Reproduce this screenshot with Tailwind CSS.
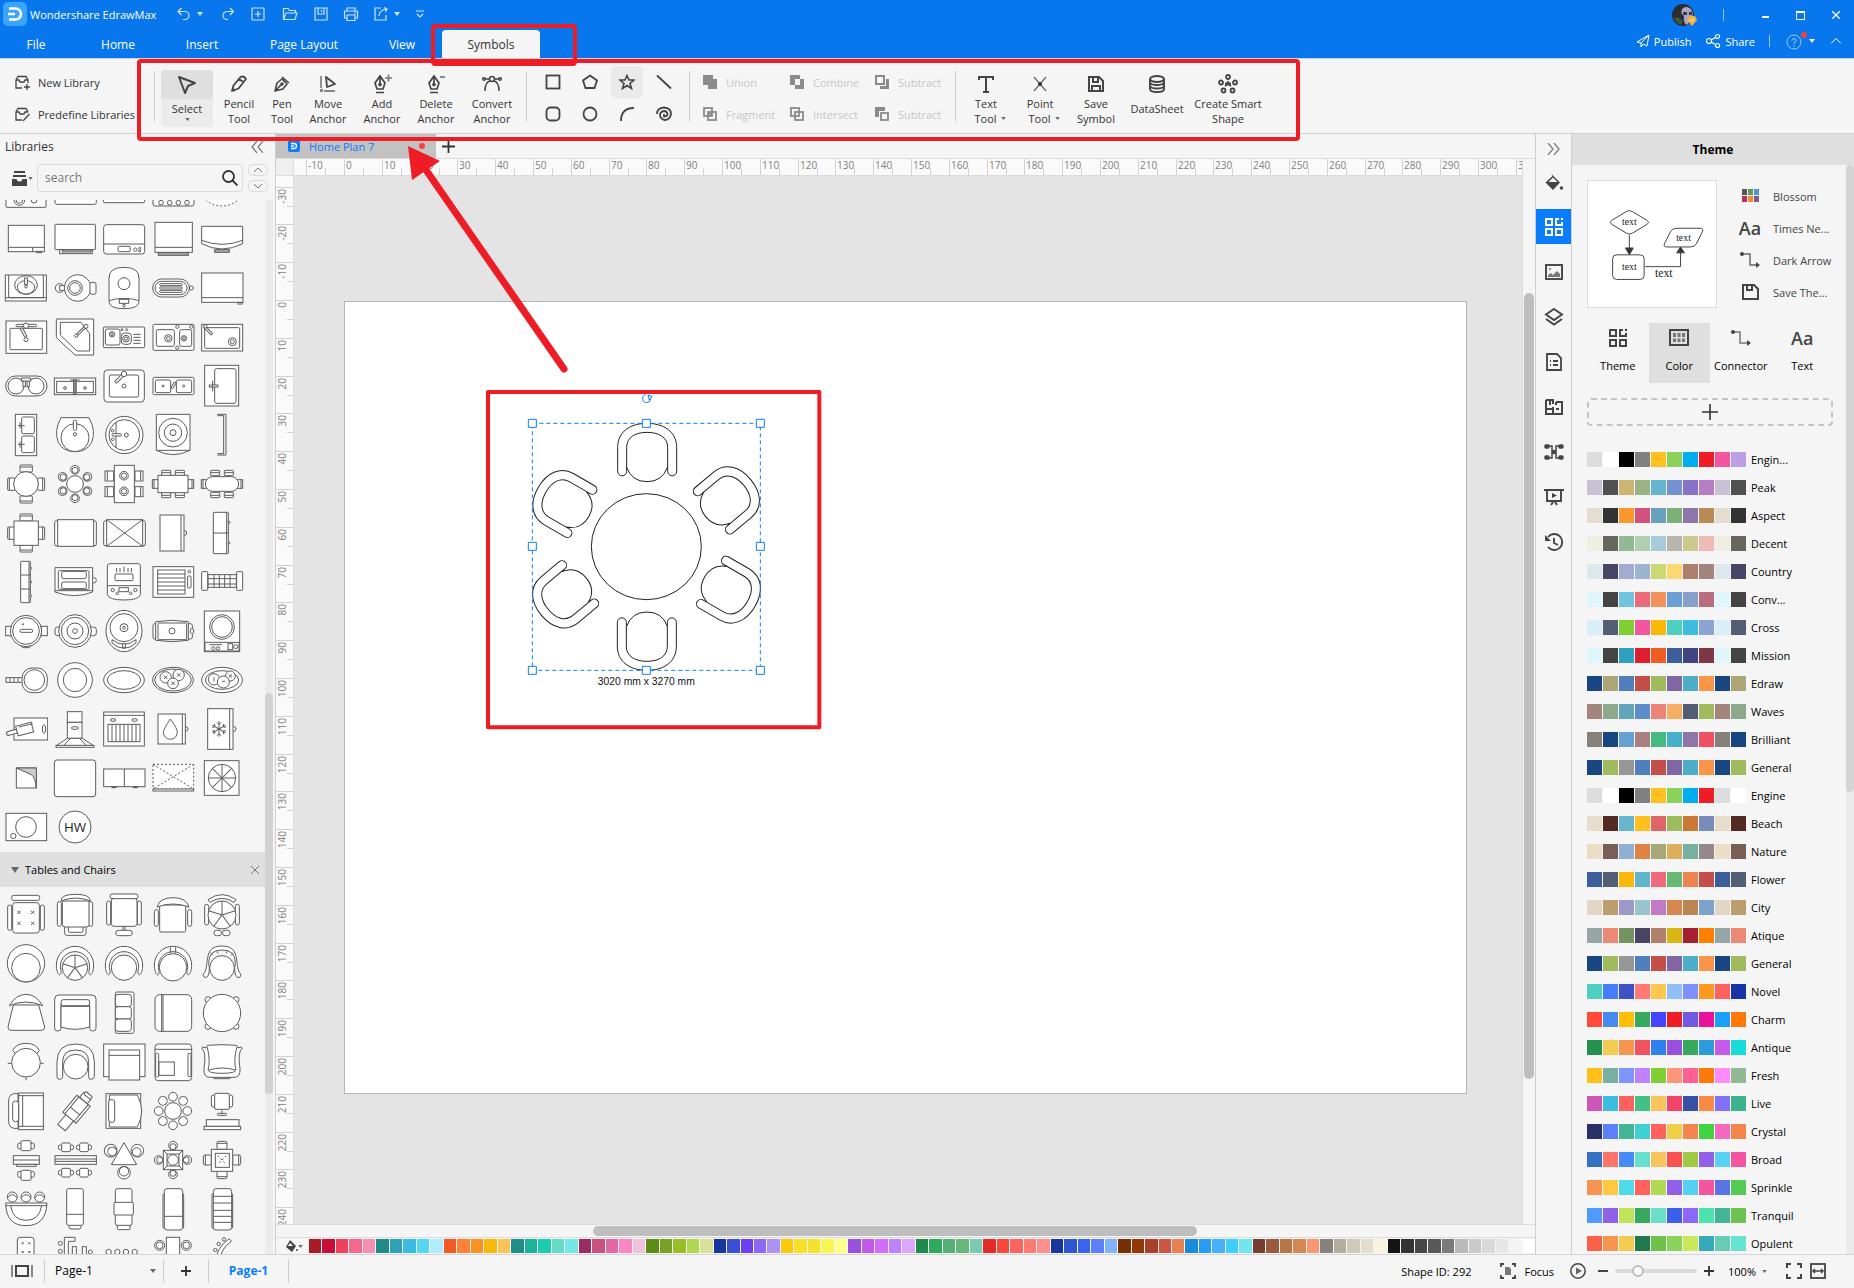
<!DOCTYPE html>
<html lang="en">
  <head>
    <meta charset="UTF-8" />
    <meta name="viewport" content="width=device-width, initial-scale=1.0" />
    <title>Wondershare EdrawMax</title>
    <script src="https://cdn.jsdelivr.net/npm/@tailwindcss/browser@4"></script>
  </head>
  <body class="bg-[#f5f5f5] font-['Open_Sans','Noto_Sans',sans-serif] text-[11px] leading-[15px] text-[#333]">
    <div class="relative flex h-screen flex-col overflow-hidden">
      <!-- Title bar and menu -->
      <header class="flex h-[58px] shrink-0 justify-between bg-[#0877ed] text-white">
        <div class="flex flex-col">
          <div class="flex h-7 items-center pl-[3px]">
            <svg class="h-6 w-6" viewBox="0 0 24 24" fill="none">
              <rect width="24" height="24" rx="5" fill="#3aa5ff" />
              <path d="M6 6.500H12.500A5.500 5.500 0 0 1 12.500 17.500H6M5 12H12" stroke="#fff" stroke-width="2.600" />
            </svg>
            <h1 class="ml-[3px] w-[142px]">Wondershare EdrawMax</h1>
            <div class="flex items-center">
              <button aria-label="Undo" class="flex w-[42px] items-center gap-1 pl-1">
                <svg class="h-4 w-4" viewBox="0 0 16 16" fill="none" stroke="#cfe5ff" stroke-width="1.200"><path d="M5.500 2 2 5.500 5.500 9M2 5.500H9A4 4 0 0 1 9 13.500H7" /></svg>
                <svg class="h-1 w-2" viewBox="0 0 8 4" fill="#cfe5ff"><path d="M1 0H7L4 4Z" /></svg>
              </button>
              <button aria-label="Redo" class="flex w-[28px] justify-center">
                <svg class="h-4 w-4" viewBox="0 0 16 16" fill="none" stroke="#cfe5ff" stroke-width="1.200"><path d="M10 2 13.500 5.500 10 9M13.500 5.500H7A4 4 0 0 0 7 13.500H8" /></svg>
              </button>
              <button aria-label="New" class="flex w-[32px] justify-center">
                <svg class="h-4 w-4" viewBox="0 0 16 16" fill="none" stroke="#cfe5ff" stroke-width="1.200"><rect x="2" y="2" width="12" height="12" rx="1" /><path d="M8 5V11M5 8H11" /></svg>
              </button>
              <button aria-label="Open" class="flex w-[32px] justify-center">
                <svg class="h-4 w-4" viewBox="0 0 16 16" fill="none" stroke="#cfe5ff" stroke-width="1.200"><path d="M1.500 13.500V2.500H6L7.500 4.500H13.500V7M1.500 13.500 4 7H15L13 13.500Z" /></svg>
              </button>
              <button aria-label="Save" class="flex w-[30px] justify-center">
                <svg class="h-4 w-4" viewBox="0 0 16 16" fill="none" stroke="#cfe5ff" stroke-width="1.200"><path d="M2 2H14V14H2ZM5 2V8H11V2M8.500 4V6" /></svg>
              </button>
              <button aria-label="Print" class="flex w-[30px] justify-center">
                <svg class="h-4 w-4" viewBox="0 0 16 16" fill="none" stroke="#cfe5ff" stroke-width="1.200"><path d="M4 5V2H12V5M4 12H1.500V5H14.500V12H12M4 9H12V14.500H4ZM11 7H13" /></svg>
              </button>
              <button aria-label="Export" class="flex w-[44px] items-center gap-1 pl-[7px]">
                <svg class="h-4 w-4" viewBox="0 0 16 16" fill="none" stroke="#cfe5ff" stroke-width="1.200"><path d="M8 2H2V14H13V9M6 10Q6 4 14 3M11 1.500 14 3 12.500 6" /></svg>
                <svg class="h-1 w-2" viewBox="0 0 8 4" fill="#cfe5ff"><path d="M1 0H7L4 4Z" /></svg>
              </button>
              <button aria-label="Customize" class="flex w-5 justify-center">
                <svg class="h-2 w-2" viewBox="0 0 8 8" fill="none" stroke="#cfe5ff" stroke-width="1.200"><path d="M0 1H8M1 4 4 7 7 4" /></svg>
              </button>
            </div>
          </div>
          <nav class="mt-0.5 flex h-7 text-xs text-white [&>button]:pt-0.5">
            <button class="w-[72px]">File</button>
            <button class="w-[92px]">Home</button>
            <button class="w-[76px]">Insert</button>
            <button class="w-[128px]">Page Layout</button>
            <button class="w-[68px]">View</button>
            <button class="ml-1.5 w-[98px] rounded-t-sm bg-[#f5f5f5] text-[#333]">Symbols</button>
          </nav>
        </div>
        <div class="flex flex-col items-end pr-2">
          <div class="flex h-[30px] items-center">
            <svg class="h-6 w-[26px]" viewBox="0 0 26 24">
              <circle cx="12" cy="12" r="11" fill="#2a2c30" />
              <path d="M11 6Q15 2 20 6L22 11Q20 20 15 22Q12 18 13 13Q9 11 11 6Z" fill="#a9a5c4" />
              <path d="M3 15Q8 13 12 18L10 22Q5 20 3 15Z" fill="#3a5a3c" />
              <path d="M12 9H16V12H12ZM18 9H21V12H18Z" fill="#3b3550" />
              <path d="M18 13H24L26 17L21 23L16 17Z" fill="#f7b23b" />
              <path d="M19 16 21 18 23 16" fill="none" stroke="#fff" />
            </svg>
            <span class="ml-[26px] h-3 w-px bg-white/60"></span>
            <button aria-label="Minimize" class="flex w-[82px] justify-center pt-1"><span class="h-0.5 w-[7px] bg-white"></span></button>
            <button aria-label="Maximize" class="-ml-4 flex w-5 justify-center"><span class="h-[9px] w-[9px] border border-t-2 border-white"></span></button>
            <button aria-label="Close" class="ml-4 flex w-5 justify-center">
              <svg class="h-2 w-2" viewBox="0 0 8 8" stroke="#fff" stroke-width="1.300"><path d="M0 0 8 8M8 0 0 8" /></svg>
            </button>
          </div>
          <div class="flex h-[22px] items-center">
            <button class="flex items-center gap-1">
              <svg class="h-[14px] w-[14px]" viewBox="0 0 14 14" fill="none" stroke="#fff"><path d="M1 8 13 1 11 12 7 10 5 13V9L12 2M1 8 5 9" /></svg>Publish
            </button>
            <button class="ml-[14px] flex items-center gap-1">
              <svg class="h-4 w-4" viewBox="0 0 16 16" fill="none" stroke="#fff" stroke-width="1.200"><circle cx="4" cy="8" r="2.500" /><circle cx="12.500" cy="3.500" r="2" /><circle cx="12.500" cy="12.500" r="2" /><path d="M6 7 10.500 4.500M6 9 10.500 11.500" /></svg>Share
            </button>
            <span class="mr-4 ml-[14px] h-3 w-px bg-white/60"></span>
            <button aria-label="Help" class="flex items-center">
              <svg class="h-[18px] w-[22px]" viewBox="0 0 22 18" fill="none"><circle cx="8" cy="10" r="7" stroke="#9cc9fa" /><path d="M6 8.500A2 2 0 1 1 8 10.500V12M8 13V14.500" stroke="#9cc9fa" /><circle cx="18" cy="3" r="3" fill="#f5413b" /></svg>
              <svg class="h-1 w-2" viewBox="0 0 8 4" fill="#fff"><path d="M1 0H7L4 4Z" /></svg>
            </button>
            <button aria-label="Collapse ribbon" class="ml-[10px] flex w-5 justify-center">
              <svg class="h-[6px] w-[10px]" viewBox="0 0 10 6" fill="none" stroke="#fff"><path d="M0 5.500 5 .5 10 5.500" /></svg>
            </button>
          </div>
        </div>
      </header>

      <!-- Ribbon -->
      <section class="flex h-[76px] shrink-0 items-start border-t border-b border-[#d0d0d0] text-[#333]">
        <div class="flex w-[154px] flex-col gap-[9px] pt-3 pl-[14px] whitespace-nowrap">
          <button class="flex h-[23px] items-center gap-[7px]">
            <svg class="h-4 w-[17px] shrink-0" viewBox="0 0 17 16" fill="none" stroke="#444" stroke-width="1.300"><path d="M8 13H2V5L4 1.500H12L14 5V8M2 5H5L6 7H10L11 5H14M13 9V15M10 12H16" /></svg>New Library
          </button>
          <button class="flex h-[23px] items-center gap-[7px]">
            <svg class="h-4 w-[17px] shrink-0" viewBox="0 0 17 16" fill="none" stroke="#444" stroke-width="1.300"><path d="M8 13H2V5L4 1.500H12L14 5M2 5H5L6 7H10L11 5H14M9 14 15.500 7" /></svg>Predefine Libraries
          </button>
        </div>
        <span class="mt-3 h-[51px] w-px bg-[#cfcfcf]"></span>
        <div class="ml-1.5 flex pt-[11px]">
          <button class="flex h-[57px] w-[52px] flex-col items-center rounded-sm bg-[#ebebeb]">
            <span class="flex h-[29px] w-full items-center justify-center rounded-t-sm bg-[#dfdfdf]">
              <svg class="h-5 w-5" viewBox="0 0 20 20" fill="none" stroke="#444" stroke-width="2" stroke-linejoin="round"><path d="M2 2 18 8 11 11 8 18Z" /></svg>
            </span>
            <span class="mt-0.5">Select</span>
            <svg class="mt-0.5 h-[3px] w-[5px]" viewBox="0 0 6 4" fill="#666"><path d="M0 0H6L3 4Z" /></svg>
          </button>
          <div class="ml-0.5 flex items-start pt-1">
            <button class="flex w-[48px] flex-col items-center">
              <svg class="mb-0.5 h-5 w-5" viewBox="0 0 20 20" fill="none" stroke="#444" stroke-width="1.800" stroke-linejoin="round"><path d="M3 17 4.500 11.500 11.500 3Q15 1.500 17 5L9.500 14.500ZM10 5 15 8.500M4 15 6 17" /></svg>Pencil<br />Tool
            </button>
            <button class="flex w-[38px] flex-col items-center">
              <svg class="mb-0.5 h-5 w-5" viewBox="0 0 20 20" fill="none" stroke="#444" stroke-width="1.600" stroke-linejoin="round"><path d="M3 17 5 9 10 5 15 10 11 15ZM10 3 17 9M3 17 9.500 10.500" /><circle cx="10" cy="10" r="1" /></svg>Pen<br />Tool
            </button>
            <button class="flex w-[54px] flex-col items-center">
              <svg class="mb-0.5 h-5 w-5" viewBox="0 0 20 20" fill="none" stroke="#444" stroke-width="1.800" stroke-linejoin="round"><path d="M3 2V14M6 17H17" stroke="#888" /><path d="M8 3 17 10 9 13Z" /><rect x="2" y="15" width="3" height="3" fill="#888" stroke="none" /></svg>Move<br />Anchor
            </button>
            <button class="flex w-[54px] flex-col items-center">
              <svg class="mb-0.5 h-5 w-5" viewBox="0 0 20 20" fill="none" stroke="#444" stroke-width="1.700"><path d="M8 2 3 9 5 15H11L13 9ZM8 3V10M4 18.500H12" /><circle cx="8" cy="10.500" r="1" /><path d="M13 4H20M16.500 .5V7.500" stroke="#777" /></svg>Add<br />Anchor
            </button>
            <button class="flex w-[54px] flex-col items-center">
              <svg class="mb-0.5 h-5 w-5" viewBox="0 0 20 20" fill="none" stroke="#444" stroke-width="1.700"><path d="M8 2 3 9 5 15H11L13 9ZM8 3V10M4 18.500H12" /><circle cx="8" cy="10.500" r="1" /><path d="M14 3H19" stroke="#777" /></svg>Delete<br />Anchor
            </button>
            <button class="flex w-[58px] flex-col items-center">
              <svg class="mb-0.5 h-5 w-5" viewBox="0 0 20 20" fill="none" stroke="#444" stroke-width="1.500"><path d="M3 5H8M12 5H17M3 17Q3 8 8 7M17 17Q17 8 12 7" /><circle cx="10" cy="5" r="2.500" /><circle cx="2" cy="5" r="1.300" /><circle cx="18" cy="5" r="1.300" /></svg>Convert<br />Anchor
            </button>
          </div>
        </div>
        <span class="mt-3 ml-[5px] h-[51px] w-px bg-[#cfcfcf]"></span>
        <div class="ml-[7px] grid grid-cols-[37px_37px_37px_37px] grid-rows-[32px_32px] pt-[7px] [&>button]:mx-auto [&>button]:flex [&>button]:h-8 [&>button]:w-8 [&>button]:items-center [&>button]:justify-center">
          <button aria-label="Rectangle"><svg class="h-4 w-4" viewBox="0 0 16 16" fill="none" stroke="#444" stroke-width="1.800"><rect x="1.500" y="1.500" width="13" height="13" /></svg></button>
          <button aria-label="Polygon"><svg class="h-4 w-4" viewBox="0 0 16 16" fill="none" stroke="#444" stroke-width="1.800"><path d="M8 1.500 15 6.500 12.500 14H3.500L1 6.500Z" /></svg></button>
          <button aria-label="Star" class="rounded-sm bg-[#eaeaea]"><svg class="h-4 w-4" viewBox="0 0 16 16" fill="none" stroke="#444" stroke-width="1.600"><path d="M8 1.500 10 6H15L11 9.500 12.500 14.500 8 11.500 3.500 14.500 5 9.500 1 6H6Z" /></svg></button>
          <button aria-label="Line"><svg class="h-4 w-4" viewBox="0 0 16 16" fill="none" stroke="#444" stroke-width="1.800"><path d="M1 1.500 15 14.500" /></svg></button>
          <button aria-label="Rounded rectangle"><svg class="h-4 w-4" viewBox="0 0 16 16" fill="none" stroke="#444" stroke-width="1.800"><rect x="1.500" y="1.500" width="13" height="13" rx="4" /></svg></button>
          <button aria-label="Ellipse"><svg class="h-4 w-4" viewBox="0 0 16 16" fill="none" stroke="#444" stroke-width="1.800"><circle cx="8" cy="8" r="6.500" /></svg></button>
          <button aria-label="Arc"><svg class="h-4 w-4" viewBox="0 0 16 16" fill="none" stroke="#444" stroke-width="1.800"><path d="M2 15Q2 2 15 2" /></svg></button>
          <button aria-label="Spiral"><svg class="h-4 w-4" viewBox="0 0 16 16" fill="none" stroke="#444" stroke-width="1.800"><path d="M1 8Q1 2 8 1.500 15 2 15 8 14 14 8.500 14 4 13 4 8.500 5 5 8.500 5 11.500 5.500 11.500 8.500 11 10.500 8 10.500V8" /></svg></button>
        </div>
        <span class="mt-3 ml-[7px] h-[51px] w-px bg-[#cfcfcf]"></span>
        <div class="ml-3 grid grid-cols-[87px_85px_76px] grid-rows-[32px_32px] pt-[7px] text-[#c6c6c6] [&>button]:flex [&>button]:items-center [&>button]:gap-2">
          <button disabled><svg class="h-4 w-4" viewBox="0 0 16 16" fill="#8b8b8b"><path d="M1 1H11V5H15V15H6V11H1Z" /></svg>Union</button>
          <button disabled><svg class="h-4 w-4" viewBox="0 0 16 16" fill="#8b8b8b" fill-rule="evenodd"><path d="M1 1H11V5H15V15H6V11H1ZM6 5V11H11V5Z" /></svg>Combine</button>
          <button disabled><svg class="h-4 w-4" viewBox="0 0 16 16" fill="#8b8b8b"><path d="M12 5H15V15H6V12H12Z" /><rect x="2" y="2" width="8" height="8" fill="none" stroke="#8b8b8b" stroke-width="2" /></svg>Subtract</button>
          <button disabled><svg class="h-4 w-4" viewBox="0 0 16 16" fill="none" stroke="#8b8b8b" stroke-width="1.800"><rect x="2" y="2" width="8" height="8" /><rect x="6" y="6" width="8" height="8" /><path d="M6 10 10 6" /></svg>Fragment</button>
          <button disabled><svg class="h-4 w-4" viewBox="0 0 16 16" fill="none" stroke="#8b8b8b" stroke-width="1.800"><rect x="2" y="2" width="8" height="8" /><rect x="6" y="6" width="8" height="8" /></svg>Intersect</button>
          <button disabled><svg class="h-4 w-4" viewBox="0 0 16 16" fill="#8b8b8b"><path d="M1 1H11V5H5V11H1Z" /><rect x="7" y="7" width="7" height="7" fill="none" stroke="#8b8b8b" stroke-width="1.800" /></svg>Subtract</button>
        </div>
        <span class="mt-3 ml-[5px] h-[51px] w-px bg-[#cfcfcf]"></span>
        <div class="ml-[3px] flex items-start pt-[15px] whitespace-nowrap">
          <button class="flex w-[54px] flex-col items-center">
            <svg class="mb-0.5 h-5 w-5" viewBox="0 0 20 20" fill="none" stroke="#444" stroke-width="2"><path d="M3 6V3H17V6M10 3V18M7 18H13" /></svg>
            <span>Text</span>
            <span class="flex items-center gap-1 pl-2">Tool <svg class="h-[3px] w-[5px]" viewBox="0 0 6 4" fill="#666"><path d="M0 0H6L3 4Z" /></svg></span>
          </button>
          <button class="flex w-[54px] flex-col items-center">
            <svg class="mb-0.5 h-5 w-5" viewBox="0 0 20 20" fill="none" stroke="#777" stroke-width="1.500"><path d="M4 3 16 17M16 3 4 17" /><circle cx="10" cy="10" r="2" fill="#333" stroke="none" /></svg>
            <span>Point</span>
            <span class="flex items-center gap-1 pl-2">Tool <svg class="h-[3px] w-[5px]" viewBox="0 0 6 4" fill="#666"><path d="M0 0H6L3 4Z" /></svg></span>
          </button>
          <button class="flex w-[58px] flex-col items-center">
            <svg class="mb-0.5 h-5 w-5" viewBox="0 0 20 20" fill="none" stroke="#444" stroke-width="2"><path d="M3 3H13L17 7V17H3ZM7 3V8H12V4M6 17V12H14V17" /></svg>Save<br />Symbol
          </button>
          <button class="flex w-[64px] flex-col items-center">
            <svg class="mb-[7px] h-5 w-5" viewBox="0 0 20 20" fill="none" stroke="#444" stroke-width="1.900"><path d="M3 5V15Q3 18 10 18Q17 18 17 15V5M3 8.500Q4 11 10 11T17 8.500M3 12Q4 14.500 10 14.500T17 12" /><ellipse cx="10" cy="5" rx="7" ry="3" /></svg>DataSheet
          </button>
          <button class="flex w-[78px] flex-col items-center">
            <svg class="mb-0.5 h-5 w-5" viewBox="0 0 20 20" fill="none" stroke="#444" stroke-width="1.800"><circle cx="10" cy="3" r="2" /><circle cx="3" cy="8.500" r="2" /><circle cx="17" cy="8.500" r="2" /><circle cx="5.500" cy="16.500" r="2" /><circle cx="14.500" cy="16.500" r="2" /><path d="M10 7V10L7 12M10 10 13 12M7 9.500H13" /></svg>Create Smart<br />Shape
          </button>
        </div>
      </section>

      <main class="flex min-h-0 flex-1">
        <!-- Libraries -->
        <aside class="flex w-[276px] shrink-0 flex-col border-r border-[#cfcfcf]">
          <div class="flex h-[30px] items-center justify-between pr-3 pb-1 pl-[5px]">
            <h2 class="text-xs">Libraries</h2>
            <button aria-label="Collapse panel"><svg class="h-3 w-3" viewBox="0 0 12 12" fill="none" stroke="#777" stroke-width="1.200"><path d="M6 0 1 6 6 12M12 0 7 6 12 12" /></svg></button>
          </div>
          <div class="flex h-7 items-center">
            <button aria-label="Library menu" class="flex w-[37px] items-center pl-3">
              <svg class="h-[15px] w-[15px]" viewBox="0 0 15 15" fill="#444"><path d="M2 0H13V2H2ZM1 4H14V6H1ZM0 8H4.500Q5 10.500 7.500 10.500T10.500 8H15V15H0Z" /></svg>
              <svg class="ml-px h-[3px] w-[5px]" viewBox="0 0 6 4" fill="#666"><path d="M0 0H6L3 4Z" /></svg>
            </button>
            <label class="flex h-7 w-[206px] items-center rounded-sm border border-[#dcdcdc] pr-1 pl-[7px]">
              <input type="text" placeholder="search" aria-label="Search libraries" class="w-full bg-transparent text-xs outline-none placeholder:text-[#777]" />
              <svg class="h-4 w-4 shrink-0" viewBox="0 0 16 16" fill="none" stroke="#333" stroke-width="1.800"><circle cx="6.500" cy="6.500" r="5.500" /><path d="M10.500 10.500 15.500 15.500" /></svg>
            </label>
            <div class="ml-[5px] flex flex-col gap-1">
              <button aria-label="Previous" class="flex h-3 w-5 items-center justify-center rounded-sm border border-[#dcdcdc]"><svg class="h-1 w-2" viewBox="0 0 8 4" fill="none" stroke="#777"><path d="M0 4 4 0 8 4" /></svg></button>
              <button aria-label="Next" class="flex h-3 w-5 items-center justify-center rounded-sm border border-[#dcdcdc]"><svg class="h-1 w-2" viewBox="0 0 8 4" fill="none" stroke="#777"><path d="M0 0 4 4 8 0" /></svg></button>
            </div>
          </div>
          <div class="mt-2 flex min-h-0 flex-1">
            <div class="w-[265px] overflow-hidden">
              <div id="kitchen" class="-mt-[35px] grid auto-rows-[49px] grid-cols-[49px_49px_49px_49px_49px] place-items-center pl-px"></div>
              <div class="mt-px flex h-[35px] items-center bg-[#dfdfdf] pr-1.5 pl-[11px] text-black">
                <svg class="h-[6px] w-2" viewBox="0 0 8 6" fill="#666"><path d="M0 0H8L4 6Z" /></svg>
                <h3 class="ml-1.5 flex-1">Tables and Chairs</h3>
                <button aria-label="Close library"><svg class="h-2 w-2" viewBox="0 0 8 8" stroke="#777"><path d="M0 0 8 8M8 0 0 8" /></svg></button>
              </div>
              <div id="chairs" class="mt-[3px] grid auto-rows-[49px] grid-cols-[49px_49px_49px_49px_49px] place-items-center pl-px"></div>
            </div>
            <div class="w-2 bg-[#ebebeb] pt-[493px]"><div class="h-[401px] rounded-full bg-[#d2d2d2]"></div></div>
          </div>
        </aside>

        <!-- Drawing area -->
        <section class="flex min-w-0 flex-1 flex-col border-r border-[#cfcfcf]">
          <div class="flex h-[25px] shrink-0 items-center border-b border-[#dcdcdc]">
            <button class="flex h-6 w-[160px] items-center bg-[#c2c2c2] pr-[11px] pl-3 text-[#0a7dff]">
              <svg class="h-3 w-3" viewBox="0 0 12 12" fill="none"><rect width="12" height="12" rx="2" fill="#0a7dff" /><path d="M3 3.500H6A2.500 2.500 0 0 1 6 8.500H3M3 6H6" stroke="#fff" stroke-width="1.300" /></svg>
              <span class="ml-[9px]">Home Plan 7</span>
              <span class="ml-auto h-1.5 w-1.5 rounded-full bg-[#f5413b]"></span>
            </button>
            <button aria-label="New tab" class="ml-1.5"><svg class="h-[13px] w-[13px]" viewBox="0 0 13 13" stroke="#333" stroke-width="1.800"><path d="M6.500 0V13M0 6.500H13" /></svg></button>
          </div>
          <div class="flex min-h-0 flex-1">
            <div class="flex min-w-0 flex-1 flex-col">
              <div class="flex h-[17px] shrink-0">
                <div class="w-[18px] border-r border-b border-[#dcdcdc] bg-[#efefef]"></div>
                <svg id="rulerX" class="h-[17px] w-full min-w-0 flex-1 border-b border-[#dcdcdc] bg-[#fafafa]"></svg>
              </div>
              <div class="flex min-h-0 flex-1">
                <svg id="rulerY" class="h-full w-[18px] shrink-0 border-r border-[#dcdcdc] bg-[#fafafa]"></svg>
                <div class="relative min-w-0 flex-1 overflow-hidden bg-[#e4e4e4]">
                  <div class="absolute top-[125px] left-[50px] h-[793px] w-[1123px] border border-[#b4b4b4] bg-white">
                    <svg class="absolute top-[77px] left-[135px] h-[360px] w-[350px]" viewBox="0 0 1050 1080" fill="none">
                      <g stroke="#222" stroke-width="3">
                        <ellipse cx="499" cy="503" rx="165" ry="159" />
                        <g id="seats"></g>
                      </g>
                      <rect x="157" y="133" width="684" height="741" stroke="#0a7dff" stroke-width="3" stroke-dasharray="12 9" />
                      <g fill="#fff" stroke="#0a7dff" stroke-width="3">
                        <path d="M145 121h24v24h-24ZM487 121h24v24h-24ZM829 121h24v24h-24ZM145 490h24v24h-24ZM829 490h24v24h-24ZM145 862h24v24h-24ZM487 862h24v24h-24ZM829 862h24v24h-24Z" />
                      </g>
                      <path d="M497 47A12 12 0 1 0 512 58M504 48 516 53 508 63Z" stroke="#0a7dff" stroke-width="3" />
                      <text x="499" y="919" text-anchor="middle" font-size="31" fill="#111" font-family="Liberation Sans, sans-serif">3020 mm x 3270 mm</text>
                      <rect x="24" y="39" width="994" height="1006" stroke="#ee1c25" stroke-width="12" stroke-linejoin="round" />
                    </svg>
                  </div>
                </div>
              </div>
            </div>
            <div class="w-[13px] border-l border-[#dcdcdc] pt-[134px] pl-px"><div class="h-[786px] w-[10px] rounded-full bg-[#bebebe]"></div></div>
          </div>
          <div class="h-[13px] shrink-0 border-t border-[#dcdcdc] pt-px pl-[317px]"><div class="h-[10px] w-[604px] rounded-full bg-[#bebebe]"></div></div>
          <div class="flex h-[17px] shrink-0 items-center border-t border-[#dcdcdc] pl-[10px]">
            <button aria-label="Fill color" class="flex w-[23px] items-center">
              <svg class="h-[14px] w-3" viewBox="0 0 12 14" fill="#444"><path d="M4 1 10 7 6 13 0 8Z" /><path d="M4 4 7 7H2Z" fill="#fff" /><circle cx="11" cy="11" r="1" /></svg>
              <svg class="h-[3px] w-[5px]" viewBox="0 0 6 4" fill="#666"><path d="M0 0H6L3 4Z" /></svg>
            </button>
            <div id="swatches" class="flex h-[14px] flex-1 gap-px"></div>
          </div>
        </section>

        <!-- Panel switcher -->
        <nav class="flex w-9 shrink-0 flex-col items-center border-r border-[#cfcfcf]">
          <button aria-label="Expand" class="flex h-[30px] w-full shrink-0 items-center justify-center"><svg class="h-3 w-[13px]" viewBox="0 0 13 12" fill="none" stroke="#777" stroke-width="1.200"><path d="M1 0 6 6 1 12M7 0 12 6 7 12" /></svg></button>
          <div class="flex w-full flex-col gap-[10px] [&>button]:flex [&>button]:h-[35px] [&>button]:items-center [&>button]:justify-center">
            <button aria-label="Fill"><svg class="h-5 w-5" viewBox="0 0 20 20" fill="#444"><path d="M7 1 8.500 3 16 10.500 9 18 1.500 10.500 8.500 4ZM9 5.500 4.500 10H13.500Z" fill-rule="evenodd" /><circle cx="17.500" cy="16" r="1.700" /></svg></button>
            <button aria-label="Theme" class="bg-[#0a7dff]"><svg class="h-5 w-5" viewBox="0 0 20 20" fill="none" stroke="#fff" stroke-width="2"><path d="M2 2H8V8H2ZM2 12H8V18H2ZM12 12H18V18H12ZM15 2H12V8H18V5" /><circle cx="18" cy="2" r="1.200" fill="#fff" stroke="none" /></svg></button>
            <button aria-label="Image"><svg class="h-5 w-5" viewBox="0 0 20 20" fill="none" stroke="#444" stroke-width="1.900"><rect x="2" y="3" width="16" height="14" /><path d="M4 15V13L7 11 9 13 13 9 16 12V15Z" fill="#777" stroke="none" /><circle cx="6" cy="7" r="1" fill="#777" stroke="none" /></svg></button>
            <button aria-label="Layers"><svg class="h-5 w-5" viewBox="0 0 20 20" fill="none" stroke="#444" stroke-width="1.900"><path d="M10 2 18 7.500 10 13 2 7.500ZM2 12 10 17.500 18 12" /></svg></button>
            <button aria-label="Notes"><svg class="h-5 w-5" viewBox="0 0 20 20" fill="none" stroke="#444" stroke-width="1.800"><path d="M3 2H13L17 6V18H3ZM6 9H7M9 9H14M6 13H7M9 13H14" /></svg></button>
            <button aria-label="Floor plan"><svg class="h-5 w-5" viewBox="0 0 20 20" fill="none" stroke="#444" stroke-width="2"><path d="M2 3H9V7M12 5H18V17H2V3M2 12H8M6 3V8M12 5V8M9 10V17M12 12H15" /></svg></button>
            <button aria-label="Network"><svg class="h-5 w-5" viewBox="0 0 20 20" fill="#444" stroke="#444" stroke-width="1.500"><path d="M5 4H8V16H5M15 4H12V16H15M8 10H12" fill="none" /><rect x="1" y="3" width="4" height="3" rx="1" /><rect x="15" y="3" width="4" height="3" rx="1" /><rect x="1" y="14" width="4" height="3" rx="1" /><rect x="15" y="14" width="4" height="3" rx="1" /><circle cx="10" cy="10" r="1.500" /></svg></button>
            <button aria-label="Presentation"><svg class="h-5 w-5" viewBox="0 0 20 20" fill="none" stroke="#444" stroke-width="1.900"><path d="M0 3H20M3 3V14H17V3M7 18 9 15M13 18 11 15" /><path d="M8 6 13 8.500 8 11Z" fill="#444" stroke="none" /></svg></button>
            <button aria-label="History"><svg class="h-5 w-5" viewBox="0 0 20 20" fill="none" stroke="#444" stroke-width="1.900"><path d="M4 5A8 8 0 1 1 4 15M10 6V11L14 13" /><path d="M1 3V9H7Z" fill="#444" stroke="none" /></svg></button>
          </div>
        </nav>

        <!-- Theme panel -->
        <aside class="flex w-[282px] shrink-0 flex-col text-black">
          <h2 class="flex h-[31px] shrink-0 items-center justify-center bg-[#dfdfdf] pt-px text-xs font-bold">Theme</h2>
          <div class="flex min-h-0 flex-1">
            <div class="flex w-[274px] flex-col overflow-hidden pt-[15px] pl-[15px]">
              <div class="flex shrink-0">
                <svg class="h-[128px] w-[130px] border border-[#dcdcdc] bg-white" viewBox="0 0 130 128" fill="none" stroke="#444" font-family="Liberation Serif, serif" font-size="10" text-anchor="middle">
                  <path d="M39 31Q42 29 45 31L60 40Q63 42 60 44L45 53Q42 55 39 53L24 44Q21 42 24 40ZM42 55V74M90 48H114Q118 48 116 52L110 64Q108 67 104 67H80Q76 67 78 63L84 51Q86 48 90 48ZM58 87H94V71" />
                  <rect x="25" y="75" width="32" height="25" rx="4" />
                  <path d="M38 68H46L42 75ZM90 73H98L94 67Z" fill="#333" />
                  <g fill="#222" stroke="none"><text x="42" y="45">text</text><text x="42" y="90">text</text><text x="97" y="61">text</text><text x="77" y="98" font-size="12">text</text></g>
                </svg>
                <div class="ml-5 flex flex-col text-[#444] [&_svg]:h-5 [&_svg]:w-[26px] [&>button]:flex [&>button]:h-8 [&>button]:items-center [&>button]:gap-2.5">
                  <button><svg viewBox="0 0 26 20"><rect x="5" y="3" width="5" height="6" fill="#555" /><rect x="11" y="3" width="5" height="6" fill="#5f9a5c" /><rect x="17" y="3" width="5" height="6" fill="#4f96d8" /><rect x="5" y="10" width="5" height="6" fill="#b5315a" /><rect x="11" y="10" width="5" height="6" fill="#fb8532" /><rect x="17" y="10" width="5" height="6" fill="#815a8c" /></svg>Blossom</button>
                  <button><span class="w-[26px] text-center text-lg font-semibold">Aa</span>Times Ne...</button>
                  <button><svg viewBox="0 0 26 20" fill="none" stroke="#666" stroke-width="1.500"><path d="M5 4H13V15H20" /><circle cx="5" cy="4" r="2" fill="#444" stroke="none" /><path d="M19 12 23 15 19 18Z" fill="#444" stroke="none" /></svg>Dark Arrow</button>
                  <button><svg viewBox="0 0 26 20" fill="none" stroke="#444" stroke-width="2"><path d="M6 3H17L21 7V17H6ZM10 3V8H15V3" /></svg>Save The...</button>
                </div>
              </div>
              <div class="mt-[15px] flex h-[60px] w-[246px] shrink-0 [&_svg]:h-5 [&>button]:flex [&>button]:flex-1 [&>button]:flex-col [&>button]:items-center [&>button]:gap-[10px] [&>button]:pt-[5px]">
                <button><svg viewBox="0 0 20 20" fill="none" stroke="#444" stroke-width="2"><path d="M2 2H8V8H2ZM2 12H8V18H2ZM12 12H18V18H12ZM15 2H12V8H18V5" /><circle cx="18" cy="2" r="1.200" fill="#444" stroke="none" /></svg>Theme</button>
                <button class="bg-[#dfdfdf]"><svg viewBox="0 0 20 20" fill="none" stroke="#444" stroke-width="2"><rect x="1" y="2" width="18" height="15" /><path d="M4 5H7V9H4ZM8.500 5H11.500V9H8.500ZM13 5H16V9H13ZM4 10.500H7V14H4ZM8.500 10.500H11.500V14H8.500ZM13 10.500H16V14H13Z" fill="#777" stroke="none" /></svg>Color</button>
                <button><svg viewBox="0 0 20 20" fill="none" stroke="#777" stroke-width="1.500"><path d="M2 4H9V15H16" /><circle cx="2" cy="4" r="2" fill="#444" stroke="none" /><path d="M16 12 20 15 16 18Z" fill="#444" stroke="none" /></svg>Connector</button>
                <button><span class="h-5 text-lg leading-5 font-semibold text-[#444]">Aa</span>Text</button>
              </div>
              <button aria-label="Add" class="mt-[15px] flex h-7 w-[246px] shrink-0 items-center justify-center rounded-sm border-2 border-dashed border-[#c4c4c4]">
                <svg class="h-4 w-4" viewBox="0 0 16 16" stroke="#333" stroke-width="1.600"><path d="M8 0V16M0 8H16" /></svg>
              </button>
              <ul id="themes" class="mt-[19px]"></ul>
            </div>
            <div class="w-2 bg-[#ebebeb]"><div class="h-[627px] rounded-t-full rounded-b-full bg-[#d4d4d4]"></div></div>
          </div>
        </aside>
      </main>

      <!-- Status bar -->
      <footer class="flex h-[34px] shrink-0 items-center border-t border-[#d4d4d4] pb-px text-black">
        <button aria-label="Toggle pages" class="flex w-11 justify-center"><svg class="h-3 w-[22px]" viewBox="0 0 22 12" fill="none" stroke="#444" stroke-width="2"><path d="M1 0V12M21 0V12" stroke="#888" /><rect x="5" y="1" width="12" height="10" /></svg></button>
        <span class="h-6 w-px bg-[#cfcfcf]"></span>
        <div class="relative w-[118px]">
          <select aria-label="Page" class="w-full appearance-none bg-transparent pl-[10px] text-xs"><option>Page-1</option></select>
          <svg class="pointer-events-none absolute top-1.5 right-[7px] h-1 w-1.5" viewBox="0 0 6 4" fill="#666"><path d="M0 0H6L3 4Z" /></svg>
        </div>
        <span class="h-6 w-px bg-[#cfcfcf]"></span>
        <button aria-label="Add page" class="flex w-11 justify-center"><svg class="h-[10px] w-[10px]" viewBox="0 0 10 10" stroke="#333" stroke-width="1.800"><path d="M5 0V10M0 5H10" /></svg></button>
        <span class="h-6 w-px bg-[#cfcfcf]"></span>
        <button class="w-[79px] text-xs font-bold text-[#0a7dff]">Page-1</button>
        <span class="h-6 w-px bg-[#cfcfcf]"></span>
        <div class="ml-auto flex items-center pr-7">
          <span>Shape ID: 292</span>
          <button class="ml-[29px] flex items-center gap-2">
            <svg class="h-4 w-4" viewBox="0 0 16 16" fill="none" stroke="#444" stroke-width="1.800"><path d="M1 4V1H4M12 1H15V4M15 12V15H12M4 15H1V12" /><path d="M5 4H9L11 6V12H5Z" fill="#777" stroke="none" /></svg>Focus
          </button>
          <button aria-label="Play" class="ml-4"><svg class="h-4 w-4" viewBox="0 0 16 16" fill="none" stroke="#444" stroke-width="1.500"><circle cx="8" cy="8" r="7.200" /><path d="M6 4.500 12 8 6 11.500Z" fill="#666" stroke="none" /></svg></button>
          <button aria-label="Zoom out" class="ml-3 h-0.5 w-[10px] bg-[#444]"></button>
          <input type="range" min="0" max="100" value="24" aria-label="Zoom" class="mx-[7px] h-1 w-[82px] appearance-none rounded-full bg-[#dadada] [&::-webkit-slider-thumb]:h-3 [&::-webkit-slider-thumb]:w-3 [&::-webkit-slider-thumb]:appearance-none [&::-webkit-slider-thumb]:rounded-full [&::-webkit-slider-thumb]:border-2 [&::-webkit-slider-thumb]:border-[#bdbdbd] [&::-webkit-slider-thumb]:bg-white" />
          <button aria-label="Zoom in"><svg class="h-[10px] w-[10px]" viewBox="0 0 10 10" stroke="#333" stroke-width="1.800"><path d="M5 0V10M0 5H10" /></svg></button>
          <button class="ml-[14px] flex items-center gap-1.5">100% <svg class="h-[3px] w-[5px]" viewBox="0 0 6 4" fill="#666"><path d="M0 0H6L3 4Z" /></svg></button>
          <button aria-label="Full screen" class="ml-[19px]"><svg class="h-4 w-4" viewBox="0 0 16 16" fill="none" stroke="#444" stroke-width="2"><path d="M1 5V1H5M11 1H15V5M15 11V15H11M5 15H1V11" /></svg></button>
          <button aria-label="Fit width" class="ml-2"><svg class="h-4 w-4" viewBox="0 0 16 16" fill="none" stroke="#444" stroke-width="1.800"><rect x="1" y="1" width="14" height="14" /><path d="M3 8H13M5 6 3 8 5 10M11 6 13 8 11 10" stroke-width="1.500" /></svg></button>
        </div>
      </footer>

      <!-- Callouts -->
      <div class="pointer-events-none absolute top-6 left-[431px] h-[42px] w-[146px] rounded-sm border-4 border-[#ee1c25]"></div>
      <div class="pointer-events-none absolute top-[59px] left-[137px] h-[82px] w-[1163px] rounded-sm border-4 border-[#ee1c25]"></div>
      <svg class="pointer-events-none absolute top-[140px] left-[400px] h-[240px] w-[180px]" viewBox="0 0 180 240">
        <path d="M164 229 26 30" stroke="#ee1c25" stroke-width="7" stroke-linecap="round" />
        <path d="M8 6 40 21 12 40Z" fill="#ee1c25" />
      </svg>
    </div>

    <script>
      // Drawing helpers, coordinates are relative to the middle of a 132 unit cell
      const R = (x, y, w, h, r = 0, f = "#fff") =>
        `<rect x="${x}" y="${y}" width="${w}" height="${h}" rx="${r}" fill="${f}"/>`;
      const C = (x, y, r) => `<circle cx="${x}" cy="${y}" r="${r}" fill="#fff"/>`;
      const E = (x, y, a, b) => `<ellipse cx="${x}" cy="${y}" rx="${a}" ry="${b}" fill="#fff"/>`;
      const F = (d, f = "#fff") => `<path d="${d}" fill="${f}"/>`;
      const L = (d) => `<path d="${d}" fill="none"/>`;
      const G = (t, s) => `<g transform="${t}">${s}</g>`;
      const rep = (list, fn) => list.map(fn).join("");
      const ring = (n, s, off = 0) =>
        rep([...Array(n).keys()], (i) => G(`rotate(${off + (i * 360) / n})`, s));
      const dash = (s) => `<g stroke-dasharray="6 6">${s}</g>`;
      const cross = (x, y, s = 5) =>
        L(`M${x - s} ${y - s}L${x + s} ${y + s}M${x + s} ${y - s}L${x - s} ${y + s}`);
      const drain = (x, y, r) => C(x, y, r) + C(x, y, r / 2);
      const arms = (x, y, h) => R(-x - 12, y, 12, h, 6) + R(x, y, 12, h, 6);
      const spokes = (y, r) => G(`translate(0 ${y})`, C(0, 0, r) + ring(5, L(`M0 0V${-r}`)) + C(0, 0, 3));
      const wrap =
        "M-56 3A56 56 0 0 1 56 3C56 18 52 30 46 33Q40 30 42 20A44 44 0 1 0-42 20Q-40 30-46 33C-52 30-56 18-56 3Z";
      const round = R(-18, -57, 37, 21, 2) + R(-18, 36, 37, 21, 2) + R(-55, -18, 21, 37, 2) + R(35, -18, 21, 37, 2) +
        L("M-50-18V18M50-18V18M-18-51H18M-18 51H18");
      const sideSeats = R(-34, -41, 27, 16, 2) + R(7, -41, 27, 16, 2) + R(-34, 25, 27, 16, 2) + R(7, 25, 27, 16, 2) +
        R(-62, -13, 18, 26) + R(44, -13, 18, 26) + L("M-33-34H-8M8-34H33M-33 34H-8M8 34H33M-57-13V13M57-13V13");

      const kitchen = [
        R(-60, -40, 120, 92, 2) + C(-20, 30, 16) + C(-20, 30, 10) + C(24, 30, 9),
        R(-60, -40, 124, 83, 6),
        R(-62, -40, 124, 78, 4),
        R(-60, -40, 123, 88, 6) + rep([-36, -10, 16, 42], (x) => C(x, 38, 7)),
        dash(E(0, 0, 60, 48)),

        R(-53, -41, 108, 79) + L("M-53 25H55M20 25V38") + R(32, 37, 14, 4),
        R(-60, -44, 121, 76, 2) + R(-46, 32, 98, 12) + R(-38, 33, 86, 6, 0, "#ccc"),
        R(-61, -43, 123, 88, 8) + L("M-61 15H62") + R(-18, 22, 37, 16, 4) + C(34, 32, 5) + C(47, 28, 3) + C(47, 36, 3),
        R(-54, -50, 112, 90) + L("M-54 25H58") + R(-44, 41, 90, 8, 0, "#aaa"),
        F("M-61-38H62V14Q0 46-61 14Z") + L("M-61 4Q0 28 62 4") + R(-22, 32, 44, 8, 0, "#aaa"),

        R(-62, -39, 123, 78) + L("M-52-39V29H52V-39M-62 29H62") + E(0, -9, 34, 28) + E(0, -2, 26, 20) + R(-4, -30, 8, 20) + C(0, -4, 4),
        C(-46, 0, 13) + R(-46, -7, 20, 14) + C(8, 0, 40) + C(0, 0, 22) + C(0, 0, 16) + R(45, -17, 18, 36, 6),
        F("M-45-30Q-45-62 0-62Q45-62 45-30V40Q45 62 0 62Q-45 62-45 40Z") + C(0, -13, 18) + L("M-45 38Q0 24 45 38") + R(-14, 34, 28, 12) + C(0, 53, 4),
        R(-61, -27, 110, 54, 27) + R(-54, -20, 96, 40, 20) + rep([-13, -3, 7], (y) => R(-40, y, 68, 6, 3)) + C(55, 0, 6),
        R(-61, -45, 124, 88) + L("M-61 29H63") + R(48, 43, 12, 5),

        R(-60, -48, 122, 97) + R(-48, -26, 97, 64, 2) + R(-30, -38, 62, 7, 3) + C(0, -34, 8) + G("rotate(-30)", R(-3, -30, 7, 30, 3)) + C(0, 8, 6),
        F("M-56-54H56V54H0L-56 2Z") + L("M-44-44H18L44-10V42H6L-44-6Z") + C(4, -4, 5) + G("rotate(45 18 -18)", R(15, -38, 6, 36, 3)) + C(33, -32, 6),
        R(-62, -30, 124, 62, 3) + R(-56, -24, 44, 48, 6) + drain(-36, -8, 8) + R(-8, -12, 30, 34, 10) + drain(6, 5, 10) + L("M28-8H50M28 1H50M28 10H50M28 19H50") + C(-6, -22, 3) + C(8, -22, 3),
        R(-60, -38, 123, 78, 4) + R(-50, -22, 54, 50, 5) + R(20, -22, 36, 50, 5) + drain(-14, 4, 11) + drain(33, 4, 8) + C(13, -31, 5) + C(55, -31, 5) + C(13, 32, 5),
        R(-61, -38, 123, 80) + R(-52, -28, 105, 62, 3) + drain(31, 14, 12) + G("rotate(-45 -44 -22)", R(-47, -36, 6, 34, 3)) + C(-50, -32, 5),

        R(-61, -30, 124, 60, 30) + C(-30, 0, 24) + C(30, 0, 24) + R(-9, -22, 7, 24) + R(3, -22, 7, 24) + R(-14, -24, 28, 9),
        R(-62, -24, 124, 50) + R(-55, -14, 52, 34) + R(3, -14, 52, 34) + C(-30, 6, 4) + C(30, 6, 4) + R(-4, -18, 7, 42, 0, "#999") + L("M-14-18H14"),
        R(-60, -48, 121, 96, 10) + R(-44, -33, 88, 66, 5) + C(0, 0, 6) + G("rotate(45 0 -36)", R(-4, -34, 8, 34, 3)) + C(0, -36, 8),
        R(-60, -26, 123, 52, 4) + R(-53, -18, 46, 38, 5) + R(10, -18, 46, 38, 5) + C(-30, 0, 3) + C(32, 0, 3) + G("rotate(35)", R(-3, -14, 6, 22, 3)),
        R(-52, -62, 102, 122) + R(-22, -52, 64, 104, 6) + R(-38, -3, 26, 6) + L("M-28-16V16"),

        R(-32, -62, 64, 124) + R(-13, -54, 38, 50, 5) + R(-13, 3, 38, 50, 5) + L("M-24-28H-4M-18-38V-20M-24 28H-4M-18 20V38"),
        F("M-42-52H42Q64-12 50 22Q36 50 0 50Q-36 50-50 22Q-64-12-42-52Z") + C(0, 8, 42) + R(-5, -44, 10, 30, 3) + C(0, -2, 5),
        C(1, 0, 56) + C(1, 0, 46) + L("M-24-39V39") + C(7, 0, 6) + R(-36, -4, 28, 7, 3) + C(-34, -13, 4) + C(-34, 13, 4),
        F("M-50-62H51V46Q0 72-50 46Z") + L("M-50 46H51") + C(0, -7, 43) + C(0, -7, 26) + C(0, -7, 9),
        L("M-14-62H12V60H-14M-14-58H5V56H-14"),

        round + C(0, 0, 37),
        ring(6, C(0, -43, 13) + C(0, -41, 9)) + C(0, 0, 25),
        rep([-25, 22], (y) => R(-57, y - 14, 26, 30) + R(33, y - 14, 24, 30) + L(`M-50 ${y - 14}V${y + 14}M50 ${y - 14}V${y + 14}`)) + R(-29, -56, 60, 112) + C(0, -25, 13) + C(0, -25, 8) + C(0, 22, 13) + C(0, 22, 8),
        sideSeats + R(-45, -26, 90, 52),
        sideSeats + R(-50, -22, 100, 44, 22),

        round + R(-36, -36, 73, 73),
        R(-61, -36, 14, 74, 4) + R(50, -36, 14, 74, 4) + R(-52, -40, 108, 80),
        R(-61, -36, 14, 74, 4) + R(50, -36, 14, 74, 4) + R(-52, -40, 108, 80) + L("M-52-40 56 40M56-40-52 40"),
        C(34, 0, 7) + R(-39, -54, 72, 108) + L("M24-54V54"),
        R(-26, -62, 45, 124, 2) + L("M-26 0H19M14-62V62") + C(21, -32, 3) + C(21, 30, 3),

        R(-16, -62, 29, 124, 2) + L("M-16-21H13M-16 21H13M9-62V62") + rep([-41, 0, 41], (y) => C(14, y, 3)),
        C(56, -5, 8) + F("M-60-43H53V30Q0 52-60 30Z") + L("M-60 26H53") + R(-50, -34, 92, 56, 3) + R(-40, -32, 74, 22, 6) + R(-40, 0, 74, 20, 6),
        F("M-50-48Q-50-55-42-55H42Q49-55 49-48V38Q45 54 0 54Q-45 54-50 38Z") + L("M-50 11H49M-22-42V-29M-12-42V-29M0-46V-29M12-42V-29M22-42V-29") + R(-27, -24, 54, 20, 3) + R(-15, 17, 28, 12) + C(-34, 24, 5) + C(34, 24, 5) + C(-20, 34, 4) + C(20, 34, 4),
        R(-60, -46, 122, 92) + R(-46, -36, 82, 72) + L("M-46-24H36M-46-12H36M-46 0H36M-46 12H36M-46 24H36") + C(49, -31, 4) + R(44, -18, 10, 36, 3),
        R(-42, -22, 85, 38) + L("M-42-10H43M-42 6H43M-24-22V16M-8-22V16M8-22V16M24-22V16") + R(-61, -31, 18, 56, 2) + R(44, -31, 18, 56, 2),

        R(-61, -14, 18, 28) + R(46, -14, 18, 28) + F("M-22 36H22L10 50H-10Z") + C(0, 0, 47) + C(0, 0, 40) + R(-18, -5, 38, 9, 4) + C(-9, -20, 2),
        R(-60, -12, 20, 26, 8) + R(44, -12, 20, 26, 8) + C(0, 0, 49) + C(0, 0, 41) + C(0, 0, 24) + C(0, 0, 7),
        E(0, 0, 54, 62) + C(0, -10, 42) + C(0, -10, 12) + C(0, -10, 4) + F("M-36 26Q0 54 36 26V36Q0 68-36 36Z") + R(-4, 38, 8, 12),
        R(-60, -22, 16, 46, 6) + R(42, -22, 16, 46, 6) + F("M-52-28Q0-36 46-28V28Q0 36-52 28Z") + R(-45, -24, 86, 50, 2) + C(-3, 0, 9) + R(52, -7, 10, 14, 3),
        R(-53, -60, 106, 122) + C(0, -12, 37) + C(0, -12, 31) + R(-51, 34, 102, 26) + C(-26, 52, 5) + C(-12, 52, 5) + L("M-38 41H0") + R(18, 38, 14, 18) + C(41, 47, 6),

        R(-60, -7, 50, 14) + L("M-48-7V7M-36-7V7M-24-7V7") + R(-12, -36, 76, 74, 30) + C(25, 0, 31),
        C(0, 0, 52) + C(0, 0, 35),
        E(0, 0, 61, 38) + E(0, 0, 50, 28),
        E(0, 0, 61, 38) + E(0, 0, 55, 33) + C(-22, -8, 17) + C(17, -15, 17) + C(0, 10, 16) + cross(-22, -8) + cross(17, -15) + cross(0, 10),
        E(0, 0, 61, 38) + E(0, 0, 50, 28) + C(-24, -2, 17) + C(25, -12, 15) + C(4, 6, 18) + cross(25, -12) + L("M-24-8V4M0 4H10"),

        R(-36, -33, 101, 66) + G("rotate(-15)", R(-60, -7, 34, 12, 6) + R(-28, -16, 48, 30)) + L("M-22-6 20-16") + E(54, 0, 5, 13),
        R(-23, -52, 44, 32) + R(-23, -20, 44, 48) + E(0, -3, 11, 4) + F("M-23 28H22L56 50H-56Z") + L("M-14 28-34 50M14 28 34 50") + R(-57, 49, 114, 6),
        R(-61, -51, 122, 102) + L("M-61-41H61") + E(-33, -27, 8, 4) + E(32, -27, 8, 4) + R(-48, -14, 96, 52) + L("M-36-14V38M-24-14V38M-12-14V38M0-14V38M12-14V38M24-14V38M36-14V38"),
        C(39, 0, 6) + R(-45, -45, 82, 90) + L("M28-45V45") + F("M-8-30Q14 0 13 10A21 21 0 0 1-29 10Q-28 0-8-30Z"),
        C(35, 0, 7) + R(-43, -61, 76, 122) + L("M23-61V61") + G("translate(-9 0)", ring(6, L("M0 0V-23M-6-20 0-14 6-20"))),

        R(-29, -30, 60, 60) + F("M-29-30H31V30Q28-2 16-10Z", "#ccc"),
        R(-62, -54, 124, 110, 8),
        R(-61, -27, 124, 53) + L("M1-27V26") + R(-36, 26, 12, 3) + R(28, 26, 12, 3),
        dash(R(-60, -41, 122, 74) + L("M-60-41 62 33M62-41-60 33")) + R(-60, 33, 122, 6),
        R(-53, -52, 104, 104) + C(0, 0, 41) + ring(8, L("M0 0V-41")),

        R(-60, -41, 122, 82) + C(0, 0, 31) + C(-38, 27, 8),
        C(0, 0, 48) +
          '<text x="0" y="15" font-size="40" text-anchor="middle" fill="#222" stroke="none">HW</text>',
      ];

      const chairs = [
        arms(43, -30, 76) + R(-43, -59, 84, 15, 6) + R(-40, -37, 80, 91, 8) + cross(-21, -8) + cross(20, -8) + cross(-21, 25) + cross(20, 25),
        R(-31, 30, 64, 31, 6) + R(-20, 30, 44, 22, 4) + arms(41, -40, 74) + F("M-38-42V28Q-38 36-30 36H34Q42 36 42 28V-42Z") + F("M-42-42Q-42-62 2-62Q46-62 46-42Q2-60-42-42Z"),
        arms(40, -42, 72) + R(-3, 32, 6, 16) + R(-25, 46, 50, 16, 8) + R(-38, -50, 77, 84, 8) + R(-42, -63, 84, 14, 6),
        arms(44, -16, 50) + R(-40, -30, 78, 81, 4) + F("M-48-24Q-40-52 0-52Q40-52 48-24Q0-42-48-24Z"),
        arms(40, -32, 62) + R(-24, 46, 22, 16, 7) + R(2, 46, 22, 16, 7) + spokes(0, 42) + F("M-42-46Q0-76 42-46L36-38Q0-62-36-38Z"),

        C(0, -2, 56) + C(0, 11, 43),
        F(wrap) + spokes(11, 38),
        F(wrap) + C(0, 11, 38),
        F(wrap) + L("M-8-50V-32M8-50V-32") + C(0, 10, 41),
        F("M-56 30C-34 10-62-54 0-54C62-54 34 10 56 30Q58 42 46 40Q34 30 40-4Q40-42 0-42Q-40-42-40-4Q-34 30-46 40Q-58 42-56 30Z") + L("M-28-26-34-34M-12-32-16-38M12-32 16-38M28-26 34-34") + C(0, 12, 37),

        F("M-38-24-54 42Q-54 52-46 52H46Q56 52 56 42L38-24Z") + F("M-50-22Q-30-56 0-56Q30-56 50-22Q0-44-50-22Z"),
        F("M-61-42Q-61-54-49-54H51Q63-54 63-42V46Q63 54 53 54Q44 54 44 46V-28H-42V46Q-42 54-52 54Q-61 54-61 46Z") + F("M-42-20V42Q0 56 44 42V-20Z") + R(-42, -40, 86, 18, 7),
        R(-26, -63, 56, 124, 5) + rep([-56, -19, 18], (y) => R(-26, y, 48, 37, 8)),
        R(-54, -55, 110, 110, 14) + L("M-30-55V55M-34-55V55"),
        C(-42, -40, 9) + C(42, -40, 9) + C(-42, 40, 9) + C(42, 40, 9) + C(0, 0, 56),

        L("M-55 4H-43M43 4H53M0 44V55") + F("M-40-34Q-30-56 0-56Q30-56 40-34L32-26Q0-46-32-26Z") + C(0, 2, 43),
        F("M-54 0Q-54-54 2-54Q58-54 58 0V44Q56 52 48 52Q41 52 41 44V-2Q40-36 2-36Q-36-36-37-2V44Q-38 52-46 52Q-54 52-54 44Z") + C(2, 14, 37),
        R(-61, -54, 124, 98) + R(-45, -36, 92, 90) + L("M-45-20H47"),
        R(-54, -54, 110, 110, 10) + L("M-54-38H56") + R(-52, -26, 9, 70, 3) + R(45, -26, 9, 70, 3) + R(-42, 0, 46, 40),
        R(-26, 42, 52, 8, 4) + F("M-61-42Q-60-48-48-42L-44-50Q0-54 44-50L48-42Q60-48 61-42Q46-30 54 20Q56 46 36 46H-36Q-56 46-54 20Q-46-30-61-42Z") + L("M-44-44Q-34 0-42 24Q-40 34 0 34T42 24Q34 0 44-44M-40 24Q0 12 40 24"),

        F("M-24-52Q-52-56-52-30V30Q-52 56-24 52Z") + R(-22, -54, 74, 110) + L("M-10-46V46M-22-46H52M-22 46H52") + R(-40, -30, 18, 62, 8),
        G("rotate(-50)", R(-64, -14, 40, 30) + R(40, -16, 20, 30, 3) + R(-26, -26, 66, 52) + L("M-26-18H40M-26 18H40M0-18V18") + R(56, -13, 10, 26, 3)),
        R(-54, -52, 104, 104) + F("M-44-48H40Q66 0 40 48H-44Z") + R(-46, -34, 18, 68, 7),
        ring(8, C(0, -43, 13)) + C(0, 0, 25),
        G("translate(0 -26)", R(-14, 33, 28, 6, 3) + L("M0 24V33") + arms(20, -22, 36) + R(-22, -27, 44, 48, 4)) + R(-47, 26, 98, 20) + R(-54, 46, 110, 10),

        G("translate(0 -43)", arms(13, -8, 18) + R(-15, -15, 30, 30, 4)) + G("translate(0 46)", arms(13, -12, 18) + R(-15, -15, 30, 30, 4)) + R(-38, -13, 78, 26) + L("M-38 0H40") + R(-28, 13, 58, 6),
        rep([-27, 27], (x) => G(`translate(${x} -38)`, arms(11, -7, 14) + R(-13, -13, 26, 26, 4)) + G(`translate(${x} 38)`, arms(11, -7, 14) + R(-13, -13, 26, 26, 4))) + R(-60, -13, 124, 26) + L("M-60-3H64M-60 4H64"),
        G("rotate(-60 -40 -28)", C(-40, -28, 19) + C(-40, -23, 13)) + C(40, -28, 19) + C(38, -24, 13) + C(0, 38, 19) + C(0, 34, 14) + F("M0-52 38 14H-38Z"),
        ring(4, C(0, -43, 13) + C(0, -40, 9)) + R(-29, -29, 58, 58) + L("M-29-29 29 29M29-29-29 29") + R(-18, -18, 36, 36) + C(0, 0, 16),
        ring(4, R(-15, -56, 30, 24, 5) + L("M-15-50H15")) + R(-32, -32, 64, 66) + R(-20, -20, 42, 42) + dash(cross(0, 0, 13)),

        rep([-41, 0, 41], (x) => C(x, -36, 15) + L(`M${x - 14} -34Q${x} -52 ${x + 14} -34`)) + F("M-61-18H63Q60 50 0 50T-61-18Z") + L("M-61-10H63M-46-10Q-40 34 0 34T47-10"),
        R(-18, 46, 36, 14, 6) + R(-25, -61, 50, 110, 6) + L("M-25 16H25"),
        R(-20, 46, 38, 16, 3) + R(-26, -61, 50, 110, 6) + R(-30, -20, 58, 38, 3),
        R(-30, -46, 62, 104, 4) + R(-26, -61, 55, 124, 8) + L("M-26 22H29"),
        R(-30, -46, 62, 104, 4) + R(-26, -61, 55, 124, 8) + L("M-26-38H29M-26-18H29M-26 4H29M-26 22H29M-26 40H29"),

        R(-26, -62, 50, 90, 8) + cross(-10, -44, 3) + cross(10, -44, 3) + cross(-10, -18, 3) + cross(10, -18, 3),
        R(-8, -34, 12, 40) + R(22, -34, 12, 40) + F("M-32-62H0V-50H-20V20H-32Z") + C(-44, -44, 6) + C(-44, -20, 6) + C(46, -18, 6),
        rep([-46, -20, 6, 32], (x) => C(x, -18, 8)),
        C(-40, -38, 15) + C(-40, -38, 10) + C(40, -38, 15) + C(40, -38, 10) + R(-20, -62, 40, 90),
        F("M22-58 28-50Q-8-26-8 20H-20Q-20-30 22-58Z") + C(6, -56, 5) + C(-10, -42, 5) + C(-20, -24, 5),
      ];

      const cell = (s) =>
        `<svg class="h-11 w-11" viewBox="-66 -66 132 132" stroke="#5c5c5c" stroke-width="3">${s}</svg>`;
      document.getElementById("kitchen").innerHTML = rep(kitchen, cell);
      document.getElementById("chairs").innerHTML = rep(chairs, cell);

      // Six chairs round the table
      const chair =
        '<path d="M-88-15C-88-62-50-87 0-87S89-62 89-15V57A13 13 0 0 1 62 57V-15C62-45 35-60 0-60S-61-45-61-15V57A13 13 0 0 1-88 57ZM-61 45Q-46 88 0 88T61 45"/>';
      document.getElementById("seats").innerHTML = rep(
        [[501, 220, 0], [250, 369, -60], [745, 357, 50], [750, 638, 120], [251, 653, -130], [501, 787, 180]],
        ([x, y, a]) => G(`translate(${x} ${y}) rotate(${a})`, chair)
      );

      // Rulers, 10 mm every 37.8 px
      function ruler(id, vertical) {
        const zero = vertical ? 124 : 50;
        let out = "";
        for (let mm = vertical ? -30 : -10; mm <= (vertical ? 240 : 310); mm += 10) {
          const p = Math.round(zero + mm * 3.78);
          const half = p + 19;
          out += vertical
            ? `<path d="M0 ${p}.5H18M11 ${half}.5H18" stroke="#d2d2d2"/><text transform="translate(10 ${p + 2}) rotate(-90)" text-anchor="end">${mm}</text>`
            : `<path d="M${p}.5 0V17M${half}.5 9V17" stroke="#d2d2d2"/><text x="${p + 2}" y="10">${mm}</text>`;
        }
        document.getElementById(id).innerHTML = `<g font-size="10" fill="#808080">${out}</g>`;
      }
      ruler("rulerX", false);
      ruler("rulerY", true);

      const colors =
        "a81c2a c90e35 ed415e f4688a f88fb2 218a8a 30a0b8 3abce0 55d6f2 b0ecfc f25a24 ff8036 fb921f fab80a f9c35c " +
        "218d87 1ab49b 1bccb1 66dcc6 72e8e8 9a2c62 c9517f e467a7 fc86c2 f1c2dc 5d8b13 76a228 9abd27 b1d751 d8e09a " +
        "17359f 3a4fd8 6b40f2 8c68f6 ad92f6 fbc90a f7e028 f5e22e f9f552 fdff8a 9a50de c259e8 d26dfb bd82ff dba8fb " +
        "1f8a4c 2fa95a 54af78 63b87a 7ccbb0 e52a2c fb463b fc625e fe7a72 fd908c 17359f 2f56d2 3a63f0 5c80fc 82b3f8 " +
        "753006 923705 a93f28 cf5540 ea7f50 1a8bdc 289df5 46b0fe 3dcffc 70e6ec 743d32 9b5a3d b57545 d68650 fb9770 " +
        "88807a b3ad9c cec9b9 e5ddce f8f2de 141414 333333 464646 585858 7a7a7a b9b9b9 c9c9c9 d9d9d9 e6e6e6 f4f4f4 ffffff";
      document.getElementById("swatches").innerHTML = rep(
        colors.split(" "),
        (c) => `<button class="h-full flex-1" aria-label="#${c}" style="background:#${c}"></button>`
      );

      const themes = [
        ["Engin...", "dddddd ffffff 000000 808080 fec020 8ad25a 00aeef ee1c25 f3569f bd9fe6"],
        ["Peak", "c9c2d4 505050 ccb472 9bb384 66b5cf 7491d2 8672c8 b57dc2 c9c2d4 505050"],
        ["Aspect", "e5ddd0 333333 fb972d d2527d 68a1be 7db077 8e76a9 b98a55 e5ddd0 333333"],
        ["Decent", "eeeee4 66665c 93b896 b0cfb1 a7cbd9 b8b4ae cbc98c eebab8 eeeee4 66665c"],
        ["Country", "dde8ec 484463 a2acd0 9db4cf cbd873 fbd873 b07f6c a2857d dde8ec 484463"],
        ["Conv...", "def6fc 444444 70c5de ed6a7c f2925a 6c9ed6 86a0cc b96d7f def6fc 444444"],
        ["Cross", "d8effa 535e74 80cf32 f3569f fab80a 4fcfc0 3dbde0 8aa5d4 d8effa 535e74"],
        ["Mission", "def6fc 444444 2da1be dc1e2e ef5c24 3c5f9c 404480 7d3745 def6fc 444444"],
        ["Edraw", "184680 ada677 4f80bd c44f4a 9fbb5d 8066a2 4caec8 f89549 184680 ada677"],
        ["Waves", "a2857d 8ca98a 60a5ba 5d8eca ee8478 f6ad64 535e74 9fbb5d a2857d 8ca98a"],
        ["Brilliant", "88807a 184680 66a0d4 a9807f 45bb80 46b0c8 8e76a9 ee5262 88807a 184680"],
        ["General", "184680 9fbb5d 969696 4f80bd c44f4a 8066a2 4caec8 f89549 184680 9fbb5d"],
        ["Engine", "dddddd ffffff 000000 808080 fec020 8ad25a 00aeef ee1c25 dddddd ffffff"],
        ["Beach", "e8ddca 512a24 68b5ce fec020 de6666 9fbb5d c97836 788cba e8ddca 512a24"],
        ["Nature", "ecdec4 795e55 90afd3 df8345 a6aa78 daaf5d 77b0a0 93898b ecdec4 795e55"],
        ["Flower", "3c5f9c 535e74 fab80a 5fb5ca ee6a7c 66b874 ee8452 c44f4a 3c5f9c 535e74"],
        ["City", "e2d6c6 bb9d6f 9c99c8 98c5cb c07ac6 d68650 b98652 7da3cc e2d6c6 bb9d6f"],
        ["Atique", "96a6a6 ee8874 759262 484463 b08168 dab414 a5202c ff8000 96a6a6 ee8874"],
        ["General", "184680 9fbb5d 969696 4f80bd c44f4a 8066a2 4caec8 f89549 184680 9fbb5d"],
        ["Novel", "4ed0c0 457dff 3f50c8 ff7a72 fec850 90bff8 7d90ff fd9820 ff625e 1735a5"],
        ["Charm", "ff4a3a 4689f2 fcbe06 37a95d 4545ff ee1c25 7159e2 e8139a 1a9ff8 ff780a"],
        ["Antique", "259050 f2cb50 f49550 f05260 2e80ee 9a50de 37a95d 2c9bdc c65aea 18dcda"],
        ["Fresh", "fec018 77b0a0 8094ff bf82ff 80cf32 fb9678 ff6094 ff780a ff8aff 93b896"],
        ["Live", "cd57b5 3dbde0 fa6260 45c084 fac35c f04468 3850a5 f98a44 8470f4 3cb290"],
        ["Crystal", "283166 5c80fa 42b595 40d0d2 ff625e f0ce4a f2844c 40d440 f469be f2844c"],
        ["Broad", "3672c4 ff7468 468af8 66dfcc f8c45c f95050 9fca44 9060e8 58d2f4 f3569f"],
        ["Sprinkle", "f89452 fec840 50dae8 ff625e b1d951 9060e8 55d0f2 f3569f 5a74e6 55ca55"],
        ["Tranquil", "4f9aff 9060e8 bee558 37a95d 6adec8 3c5eea 8c68fa 4ae4ac 42b595 6ec24f"],
        ["Opulent", "fb6048 f49550 f2cb50 20784c 6ec24a 8ad25a cae85a 36aaba 66ccb4 66e2d0"],
      ];
      document.getElementById("themes").innerHTML = rep(
        themes,
        ([name, list]) =>
          `<li class="flex h-7 items-center"><button class="flex items-center"><span class="flex gap-px">${rep(
            list.split(" "),
            (c) => `<span class="h-[15px] w-[15px]" style="background:#${c}"></span>`
          )}</span><span class="ml-[5px]">${name}</span></button></li>`
      );
    </script>
  </body>
</html>
